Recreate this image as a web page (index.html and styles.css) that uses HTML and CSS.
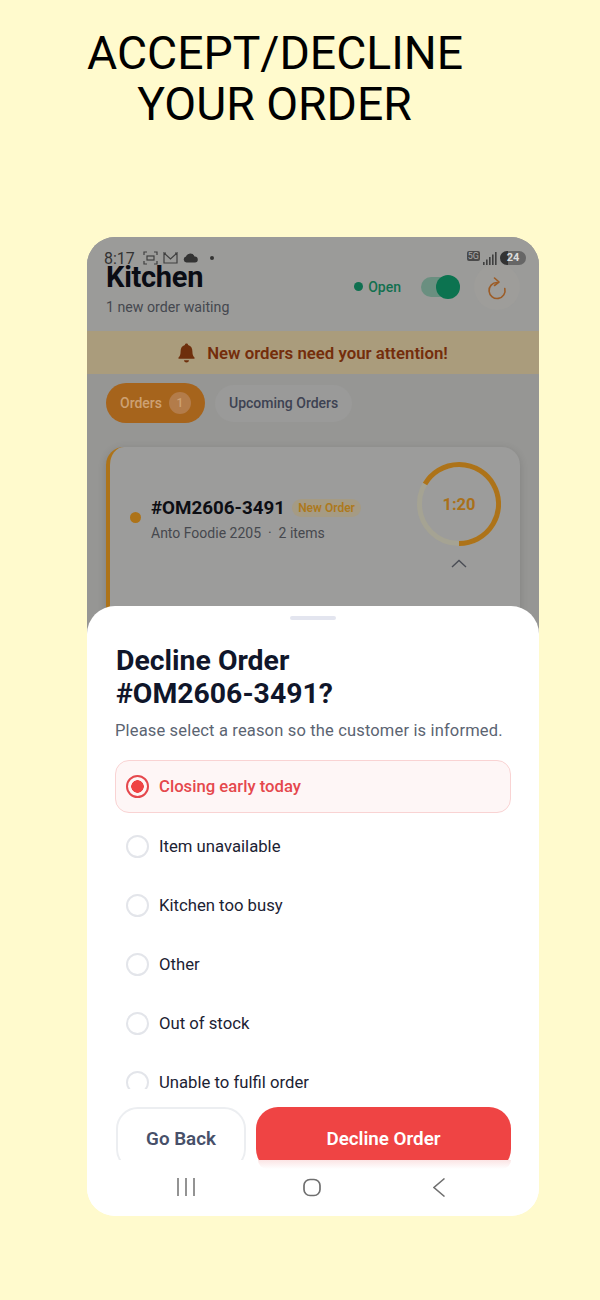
FILE: index.html
```html
<!DOCTYPE html>
<html>
<head>
  <link rel="stylesheet" href="styles.css">
</head>
<body>
  <h1 class="headline">ACCEPT/DECLINE<br>YOUR ORDER</h1>

  <div class="phone">
    <div class="header">
      <div class="header-left">
        <div class="app-title">Kitchen</div>
        <div class="app-sub">1 new order waiting</div>
      </div>
      <div class="status-open"><span class="open-dot"></span>Open</div>
      <div class="toggle"><span class="toggle-knob"></span></div>
      <div class="refresh">
        <svg width="24" height="26" viewBox="0 0 24 26" fill="none" stroke="#9c5c26" stroke-width="1.600" stroke-linecap="round" stroke-linejoin="round">
          <path d="M12 8.500A8 8 0 1 0 19.800 14.500"/>
          <path d="M9.500 4l4.500 4-4.500 3.500"/>
        </svg>
      </div>
    </div>

    <div class="banner">
      <svg width="17" height="20" viewBox="0 0 17 20">
        <path d="M8.500 0.500c1 0 1.600.7 1.600 1.500 3 .8 4.300 3.300 4.300 6.500 0 3 .7 4.700 2.100 6v1.300H.5V14.500c1.400-1.300 2.100-3 2.100-6 0-3.200 1.300-5.700 4.300-6.500C6.900 1.200 7.500.5 8.500.5z"/>
        <path d="M6 17.300h5C10.800 18.700 9.800 19.500 8.500 19.500S6.200 18.700 6 17.300z"/>
      </svg>
      New orders need your attention!
    </div>

    <div class="tabs">
      <div class="tab tab-active">Orders <span class="tab-count">1</span></div>
      <div class="tab">Upcoming Orders</div>
    </div>

    <div class="order-card">
      <span class="order-dot"></span>
      <div class="order-info">
        <div class="order-top">
          <span class="order-no">#OM2606-3491</span>
          <span class="order-badge">New Order</span>
        </div>
        <div class="order-meta">Anto Foodie 2205 &nbsp;·&nbsp; 2 items</div>
      </div>
      <div class="order-timer">
        <div class="ring">
          <svg width="84" height="84" viewBox="0 0 84 84" fill="none" stroke-width="5">
            <circle cx="42" cy="42" r="39.500" stroke="#a5a393"/>
            <path d="M42 81.500A39.500 39.500 0 1 0 8 22" stroke="#ad7319"/>
          </svg>
          <span class="ring-time">1:20</span>
        </div>
        <svg class="chevron" width="16" height="9" viewBox="0 0 16 9" fill="none" stroke="#4a4d55" stroke-width="1.400">
          <path d="M1 8l7-6.500L15 8"/>
        </svg>
      </div>
    </div>

    <div class="statusbar">
      <div class="status-left">
        <span class="clock">8:17</span>
        <svg width="15" height="14" viewBox="0 0 15 14" fill="none" stroke="#404040" stroke-width="1.200">
          <path d="M1 4V1h3M11 1h3v3M14 10v3h-3M4 13H1v-3"/>
          <rect x="4" y="5" width="7" height="4"/>
        </svg>
        <svg width="15" height="12" viewBox="0 0 15 12" fill="none" stroke="#404040" stroke-width="1.200">
          <path d="M1 11V1l6.500 6L14 1v10zM1 1h2M14 1h-2"/>
        </svg>
        <svg width="15" height="10" viewBox="0 0 15 10" fill="#333">
          <path d="M3.500 9.500a3 3 0 0 1-.5-5.900A4.500 4.500 0 0 1 11.500 3.500 3 3 0 0 1 12 9.500z"/>
        </svg>
        <span class="status-dot"></span>
      </div>
      <div class="status-right">
        <span class="net">5G</span>
        <svg width="14" height="13" viewBox="0 0 14 13" fill="#404040">
          <rect x="0" y="10" width="1.600" height="3"/>
          <rect x="3" y="7.500" width="1.600" height="5.500"/>
          <rect x="6" y="5" width="1.600" height="8"/>
          <rect x="9" y="2.500" width="1.600" height="10.500"/>
          <rect x="12" y="0" width="1.600" height="13"/>
        </svg>
        <span class="battery">24</span>
      </div>
    </div>

    <div class="sheet">
      <div class="handle"></div>
      <h2 class="sheet-title">Decline Order<br>#OM2606-3491?</h2>
      <p class="sheet-sub">Please select a reason so the customer is informed.</p>

      <div class="reasons">
        <div class="reason reason-on"><span class="radio radio-on"></span>Closing early today</div>
        <div class="reason"><span class="radio"></span>Item unavailable</div>
        <div class="reason"><span class="radio"></span>Kitchen too busy</div>
        <div class="reason"><span class="radio"></span>Other</div>
        <div class="reason"><span class="radio"></span>Out of stock</div>
        <div class="reason"><span class="radio"></span>Unable to fulfil order</div>
      </div>

      <div class="actions">
        <div class="btn btn-back">Go Back</div>
        <div class="btn btn-decline">Decline Order</div>
      </div>

      <div class="navbar">
        <span class="btn-glow"></span>
        <svg width="18" height="18" viewBox="0 0 18 18" stroke="#6f6f6f" stroke-width="1.500">
          <path d="M1 0v18M9 0v18M17 0v18"/>
        </svg>
        <svg width="18" height="19" viewBox="0 0 18 19" fill="none" stroke="#6f6f6f" stroke-width="1.700">
          <rect x="1" y="1.500" width="16" height="16" rx="6"/>
        </svg>
        <svg class="nav-back" width="12" height="19" viewBox="0 0 12 19" fill="none" stroke="#6f6f6f" stroke-width="1.500">
          <path d="M11.500 0.500L1 9.500l10.500 9"/>
        </svg>
      </div>
    </div>
  </div>
</body>
</html>
```

FILE: styles.css
```css
body {
  margin: 0;
  background-color: #fffacd;
  font-family: Roboto, "Liberation Sans", sans-serif;
  width: 600px;
  height: 1300px;
  overflow: hidden;
}
.headline {
  width: 375px;
  margin: 0 0 0 87px;
  padding-top: 28px;
  height: 237px;
  box-sizing: border-box;
  font-size: 46.300px;
  line-height: 51px;
  font-weight: 400;
  color: #000;
  text-align: center;
}
.phone {
  position: relative;
  width: 452px;
  height: 979px;
  margin-left: 87px;
  border-radius: 28px;
  overflow: hidden;
  background: linear-gradient(#969694 50%, #fff 50%);
}

/* app behind the sheet, colours are the dimmed ones */
.header {
  display: flex;
  align-items: center;
  height: 94px;
  padding: 9px 19px 0 19px;
  box-sizing: border-box;
  background-color: #9b9b99;
}
.header-left {
  flex: 1;
}
.app-title {
  font-size: 29px;
  line-height: 32px;
  font-weight: 700;
  letter-spacing: -0.3px;
  color: #0a0c14;
}
.app-sub {
  margin-top: 5px;
  font-size: 14.200px;
  line-height: 18px;
  color: #45484f;
}
.status-open {
  display: flex;
  align-items: center;
  gap: 5px;
  margin-right: 20px;
  margin-top: -4px;
  font-size: 14px;
  font-weight: 500;
  color: #12704f;
}
.open-dot {
  width: 9px;
  height: 9px;
  border-radius: 50%;
  background-color: #0f7050;
}
.toggle {
  display: flex;
  justify-content: flex-end;
  align-items: center;
  width: 39px;
  height: 20px;
  margin-top: -4px;
  margin-right: 14px;
  border-radius: 10px;
  background-color: #6a8f80;
}
.toggle-knob {
  width: 24px;
  height: 24px;
  border-radius: 50%;
  background-color: #0c7350;
}
.refresh {
  display: flex;
  align-items: center;
  justify-content: center;
  width: 46px;
  height: 46px;
  margin-top: -4px;
  border-radius: 50%;
  background-color: #9e9d9a;
}
.banner {
  display: flex;
  align-items: center;
  justify-content: center;
  gap: 12px;
  height: 43px;
  background-color: #aa9c7c;
  font-size: 16.800px;
  font-weight: 600;
  color: #742d0b;
}
.banner svg {
  fill: #6e2f0c;
}
.tabs {
  display: flex;
  align-items: center;
  gap: 10px;
  padding: 9px 19px 0;
}
.tab {
  display: flex;
  align-items: center;
  height: 37px;
  padding: 0 14px;
  border-radius: 20px;
  background-color: #9a9a99;
  font-size: 14px;
  font-weight: 500;
  color: #3d4252;
}
.tab-active {
  gap: 7px;
  height: 40px;
  background-color: #a6641c;
  color: #cda173;
}
.tab-count {
  display: flex;
  align-items: center;
  justify-content: center;
  width: 22px;
  height: 22px;
  border-radius: 50%;
  background-color: #b37c4a;
  font-size: 12px;
}
.order-card {
  display: flex;
  align-items: flex-start;
  height: 240px;
  margin: 24px 19px 0;
  padding: 14px 19px 0 20px;
  box-sizing: border-box;
  border-left: 4px solid #ad7319;
  border-radius: 18px;
  background-color: #9c9c9b;
  box-shadow: 0 2px 8px rgba(0, 0, 0, 0.14);
}
.order-dot {
  flex: none;
  width: 11px;
  height: 11px;
  margin: 51px 10px 0 0;
  border-radius: 50%;
  background-color: #ad7319;
}
.order-info {
  flex: 1;
  padding-top: 35px;
}
.order-top {
  display: flex;
  align-items: center;
  gap: 7px;
}
.order-no {
  font-size: 18.800px;
  line-height: 24px;
  font-weight: 700;
  color: #0d0e13;
}
.order-badge {
  padding: 2px 6px;
  border-radius: 9px;
  background-color: #a59b84;
  font-size: 12px;
  font-weight: 600;
  color: #ad791c;
}
.order-meta {
  margin-top: 4px;
  font-size: 14px;
  line-height: 18px;
  color: #46484e;
}
.order-timer {
  display: flex;
  flex-direction: column;
  align-items: center;
  margin-top: 1px;
}
.ring {
  position: relative;
  width: 84px;
  height: 84px;
}
.ring svg {
  display: block;
}
.ring-time {
  position: absolute;
  inset: 0;
  display: flex;
  align-items: center;
  justify-content: center;
  font-size: 16.500px;
  font-weight: 700;
  color: #a9701a;
}
.chevron {
  margin-top: 13px;
}

/* phone status bar, sits on top of the app header */
.statusbar {
  position: absolute;
  top: 12px;
  left: 17px;
  right: 13px;
  display: flex;
  justify-content: space-between;
  align-items: center;
  height: 18px;
}
.status-left {
  display: flex;
  align-items: center;
  gap: 5px;
}
.clock {
  font-size: 16px;
  color: #333;
  margin-right: 3px;
}
.status-dot {
  width: 4px;
  height: 4px;
  margin-left: 7px;
  border-radius: 50%;
  background-color: #333;
}
.status-right {
  display: flex;
  align-items: center;
  gap: 3px;
}
.net {
  padding: 0 1px;
  border-radius: 2px;
  background-color: #4a4a4a;
  font-size: 9px;
  line-height: 10px;
  color: #aaa;
  margin-top: -4px;
}
.battery {
  width: 26px;
  height: 14px;
  border-radius: 7px;
  background: linear-gradient(90deg, #333 30%, #666 30%);
  font-size: 11px;
  line-height: 14px;
  font-weight: 700;
  color: #ddd;
  text-align: center;
}

/* decline sheet */
.sheet {
  position: absolute;
  left: 0;
  right: 0;
  bottom: 0;
  height: 610px;
  display: flex;
  flex-direction: column;
  border-radius: 28px 28px 0 0;
  background-color: #fff;
}
.handle {
  width: 46px;
  height: 4px;
  margin: 10px auto 0;
  border-radius: 2px;
  background-color: #e3e5ef;
}
.sheet-title {
  margin: 24px 28px 0 29px;
  font-size: 28.400px;
  line-height: 33px;
  font-weight: 700;
  color: #10162a;
}
.sheet-sub {
  margin: 10px 0 0 28px;
  font-size: 16.500px;
  line-height: 22px;
  letter-spacing: 0.16px;
  color: #5b6472;
}
.reasons {
  height: 329px;
  margin: 18px 28px 0 28px;
  overflow: hidden;
}
.reason {
  display: flex;
  align-items: center;
  gap: 10px;
  height: 53px;
  padding: 0 10px;
  margin-bottom: 6px;
  box-sizing: border-box;
  border: 1px solid transparent;
  border-radius: 14px;
  font-size: 16.700px;
  color: #1c2233;
}
.reason-on {
  margin-bottom: 7px;
  border-color: #f9d3d3;
  background-color: #fef6f6;
  font-weight: 500;
  color: #e5484d;
}
.radio {
  flex: none;
  width: 23px;
  height: 23px;
  box-sizing: border-box;
  border: 2px solid #e3e5ea;
  border-radius: 50%;
}
.radio-on {
  border-color: #e5484d;
  background: radial-gradient(circle, #ef4444 0 6px, transparent 6.500px);
}
.actions {
  display: flex;
  gap: 10px;
  height: 53px;
  margin: 18px 28px 0 29px;
  overflow: hidden;
}
.btn {
  display: flex;
  align-items: center;
  justify-content: center;
  height: 64px;
  box-sizing: border-box;
  border-radius: 22px;
  font-size: 18.800px;
  font-weight: 600;
}
.btn-back {
  width: 130px;
  border: 2px solid #eceef1;
  color: #475069;
}
.btn-decline {
  flex: 1;
  background-color: #ef4444;
  color: #fff;
}
.navbar {
  position: relative;
  display: flex;
  align-items: center;
  gap: 108px;
  height: 54px;
  padding: 0 0 2px 90px;
}
.nav-back {
  margin-left: 4px;
}
.btn-glow {
  position: absolute;
  top: 0;
  left: 171px;
  width: 253px;
  height: 9px;
  border-radius: 0 0 14px 14px;
  background: linear-gradient(#fbe4e4, #fff);
}
```
